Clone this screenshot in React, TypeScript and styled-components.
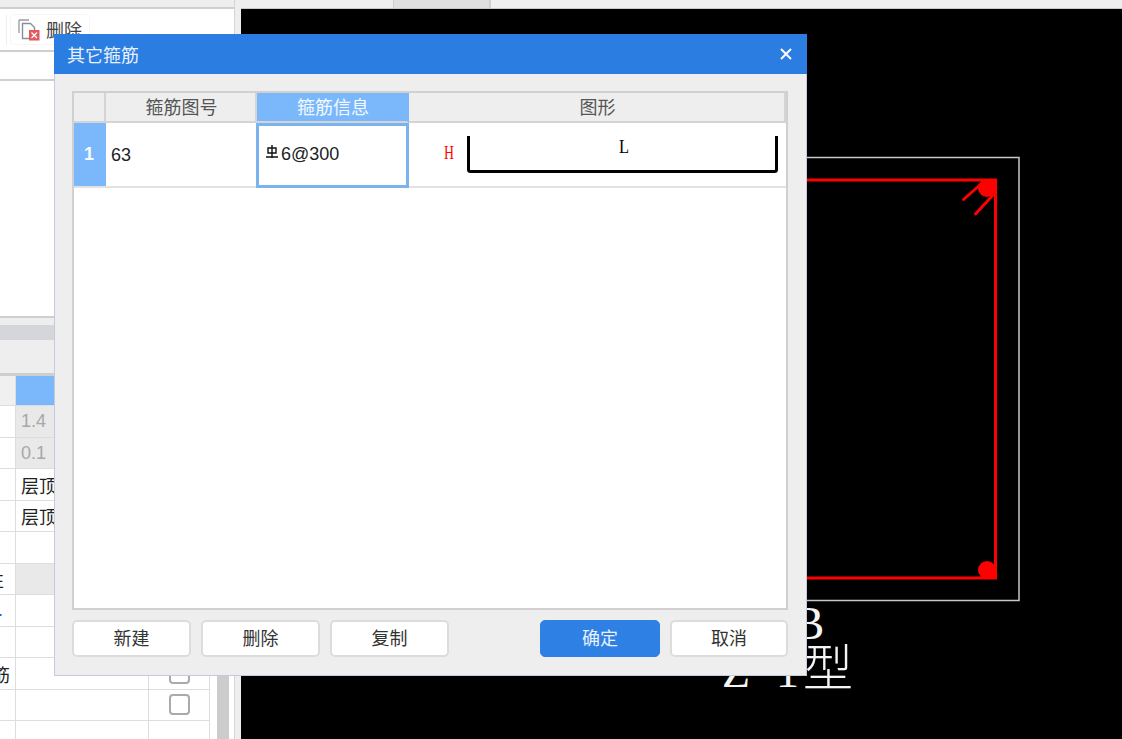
import React from "react";
import styled, { createGlobalStyle } from "styled-components";

const Global = createGlobalStyle`
  html, body { margin: 0; padding: 0; background: #000; }
  body { font-family: "Liberation Sans", "Noto Sans CJK SC", sans-serif; }
  * { box-sizing: border-box; }
`;

const Page = styled.div`
  position: relative;
  width: 1122px;
  height: 739px;
  overflow: hidden;
  display: flex;
  font-size: 18px;
  color: #222;
`;

/* left panel */
const LeftPanel = styled.aside`
  width: 241px;
  height: 100%;
  flex: none;
  display: flex;
  background: #fff;
`;
const LeftMain = styled.div`
  width: 234px;
  display: flex;
  flex-direction: column;
`;
const Gutter = styled.div`
  width: 7px;
  background: #eee;
  border-left: 1px solid #d4d4d4;
`;
const LeftStrip = styled.div`
  height: 9px;
  flex: none;
  background: #eee;
  border-bottom: 2px solid #cfcfcf;
`;
const Toolbar = styled.div`
  height: 43px;
  flex: none;
  display: flex;
  align-items: center;
  padding-left: 6px;
  gap: 3px;
  background: #fff;
  border-bottom: 2px solid #cfcfcf;
`;
const ToolSeparator = styled.span`
  width: 1px;
  height: 30px;
  background: #eee;
`;
const ToolButton = styled.div`
  width: 80px;
  height: 31px;
  display: flex;
  align-items: center;
  gap: 6px;
  padding-left: 7px;
  border: 1px solid #f6f6f6;
  border-radius: 4px;
  color: #444;
  line-height: 1;
`;
const ToolLabel = styled.span`
  padding-top: 3px;
`;
const SubBar = styled.div`
  height: 29px;
  flex: none;
  background: #fff;
  border-bottom: 2px solid #cfcfcf;
`;
const UpperArea = styled.div`
  height: 237px;
  flex: none;
  background: #fff;
  border-bottom: 2px solid #cfcfcf;
`;
const SplitGap = styled.div`
  height: 7px;
  flex: none;
  background: #eee;
`;
const GroupBar = styled.div`
  height: 15px;
  flex: none;
  background: #d5d6d9;
`;
const LowerTools = styled.div`
  height: 36px;
  flex: none;
  background: #eee;
  border-bottom: 3px solid #cfcfcf;
`;
const LowerBody = styled.div`
  flex: 1;
  min-height: 0;
  display: flex;
  overflow: hidden;
`;
const PropTable = styled.div`
  width: 210px;
  flex: none;
  display: grid;
  grid-template-columns: 16px 133px 61px;
  grid-template-rows: 30px;
  grid-auto-rows: 31.5px;
  align-content: start;
`;
const PropCell = styled.div<{ $bg?: string; $color?: string }>`
  display: flex;
  align-items: center;
  justify-content: flex-start;
  overflow: hidden;
  white-space: nowrap;
  padding: 1px 0 0 5px;
  background: ${(p) => p.$bg || "#fff"};
  color: ${(p) => p.$color || "#222"};
  border-right: 1px solid #ddd;
  border-bottom: 1px solid #ddd;
`;
const RowHead = styled(PropCell)<{ $inset?: number }>`
  justify-content: flex-end;
  padding: 1px ${(p) => p.$inset ?? 3}px 0 0;
`;
const CheckCell = styled(PropCell)`
  justify-content: center;
  padding: 0;
`;
const CheckBox = styled.span`
  width: 21px;
  height: 21px;
  border: 2px solid #aaa;
  border-radius: 4px;
  background: #fff;
`;
const ScrollTrack = styled.div`
  width: 24px;
  flex: none;
  padding: 0 5px 0 7px;
  background: #fff;
`;
const ScrollThumb = styled.div`
  height: 100%;
  background: #ccc;
`;

/* canvas */
const CanvasColumn = styled.main`
  flex: 1;
  display: flex;
  flex-direction: column;
  min-width: 0;
`;
const TabStrip = styled.div`
  height: 9px;
  flex: none;
  display: grid;
  grid-template-columns: 152px 98px 1fr;
  background: #eee;
  border-bottom: 1px solid #c8c8c8;
`;
const TabSlot = styled.div<{ $active?: boolean }>`
  background: ${(p) => (p.$active ? "#e0e0e0" : "#eee")};
  border-right: ${(p) => (p.$active ? "2px solid #cfcfcf" : "0")};
  border-left: ${(p) => (p.$active ? "1px solid #cfcfcf" : "0")};
`;
const Canvas = styled.div`
  flex: 1;
  background: #000;
`;
const Drawing = styled.svg`
  display: block;
  width: 881px;
  height: 730px;
`;
const CadText = styled.text`
  fill: #f4f4f4;
  font-family: "Liberation Serif", "Noto Sans CJK SC", serif;
  font-weight: 300;
`;

/* dialog */
const Dialog = styled.section`
  position: absolute;
  left: 54px;
  top: 34px;
  width: 753px;
  height: 642px;
  display: flex;
  flex-direction: column;
  background: #eee;
  border: 1px solid #c3cbdc;
  border-top: 0;
`;
const TitleBar = styled.header`
  height: 40px;
  flex: none;
  margin: 0 -1px;
  padding: 0 15px 0 13px;
  display: flex;
  align-items: center;
  justify-content: space-between;
  background: #2b7de1;
  color: #e8f1fc;
`;
const DialogBody = styled.div`
  flex: 1;
  min-height: 0;
  display: flex;
  flex-direction: column;
  padding: 17px 18px 18px 17px;
  gap: 10px;
`;
const Grid = styled.div`
  flex: 1;
  min-height: 0;
  display: grid;
  grid-template-columns: 32px 151px 152px 1fr;
  grid-template-rows: 30px 65px;
  align-content: start;
  background: #fff;
  border: 2px solid #d0d0d0;
`;
const HeadCell = styled.div<{ $active?: boolean }>`
  display: flex;
  align-items: center;
  justify-content: center;
  padding: 2px 0 0 2px;
  line-height: 1;
  background: ${(p) => (p.$active ? "#7ab8fb" : "#eee")};
  color: ${(p) => (p.$active ? "#f4f9ff" : "#555")};
  border-right: 2px solid ${(p) => (p.$active ? "#7ab8fb" : "#d4d4d4")};
  border-bottom: 2px solid #d4d4d4;
`;
const NumCell = styled.div`
  display: flex;
  align-items: center;
  justify-content: center;
  padding-right: 2px;
  background: #7ab8fb;
  color: #f4f9ff;
  font-weight: 700;
  border-bottom: 2px solid #e2e2e2;
`;
const DataCell = styled.div`
  display: flex;
  align-items: center;
  padding: 2px 0 0 5px;
  background: #fff;
  color: #222;
  border-bottom: 2px solid #e2e2e2;
`;
const SelectedCell = styled.div`
  display: flex;
  align-items: center;
  padding: 0 0 2px 6px;
  background: #fff;
  color: #222;
  border: 3px solid #7ab4ee;
  margin-left: -1px;
`;
const ShapeCell = styled.div`
  background: #fff;
  border-bottom: 2px solid #e2e2e2;
`;
const Shape = styled.svg`
  display: block;
  width: 377px;
  height: 63px;
`;
const ShapeLabel = styled.text<{ $red?: boolean }>`
  font-family: "Liberation Serif", serif;
  font-size: 18px;
  fill: ${(p) => (p.$red ? "#f00" : "#000")};
`;
const GradeMark = styled.svg`
  width: 14px;
  height: 16px;
  flex: none;
  margin: -5px 2px 0 0;
`;
const Footer = styled.footer`
  height: 37px;
  flex: none;
  display: flex;
  gap: 10px;
`;
const Button = styled.button<{ $primary?: boolean; $width?: number }>`
  flex: 0 0 ${(p) => p.$width ?? 119}px;
  height: 37px;
  padding: 0;
  font: inherit;
  line-height: 1;
  border-radius: 5px;
  border: ${(p) => (p.$primary ? "1px solid #2f80e4" : "2px solid #dcdcdc")};
  background: ${(p) => (p.$primary ? "#2f80e4" : "#fff")};
  color: ${(p) => (p.$primary ? "#e8f1fc" : "#333")};
`;
const FooterSpacer = styled.span`
  flex: 1;
`;

const rows: { head?: string; headColor?: string; inset?: number; value?: string; muted?: boolean; shaded?: boolean; check?: boolean }[] = [
  { value: "1.4", muted: true },
  { value: "0.1", muted: true },
  { value: "层顶" },
  { value: "层顶" },
  {},
  { head: "性", inset: 11, shaded: true },
  { head: ".", inset: 12, headColor: "#2a55ff" },
  {},
  { head: "筋", inset: 5, check: true },
  { check: true },
  {},
];

const DeleteIcon = () => (
  <svg width="22" height="22" viewBox="0 0 22 22" fill="none">
    <path d="M1 1h10M1 1v13" stroke="#9a9a9a" strokeWidth="1.3" />
    <path d="M4.5 4.5h8l4 4v11h-12z" fill="#fff" stroke="#8a8f96" strokeWidth="1.4" />
    <rect x="11" y="11" width="10.5" height="10.5" fill="#e05a5e" />
    <path d="M13.5 13.5l5.5 5.5M19 13.5l-5.5 5.5" stroke="#fff" strokeWidth="1.3" />
  </svg>
);

export default function App() {
  return (
    <Page>
      <Global />
      <LeftPanel>
        <LeftMain>
          <LeftStrip />
          <Toolbar>
            <ToolSeparator />
            <ToolButton>
              <DeleteIcon />
              <ToolLabel>删除</ToolLabel>
            </ToolButton>
          </Toolbar>
          <SubBar />
          <UpperArea />
          <SplitGap />
          <GroupBar />
          <LowerTools />
          <LowerBody>
            <PropTable>
              <RowHead $bg="#f0f0f0" />
              <PropCell $bg="#7ab8fb" />
              <PropCell $bg="#f0f0f0" />
              {rows.map((r, i) => (
                <React.Fragment key={i}>
                  <RowHead $color={r.headColor} $inset={r.inset}>{r.head}</RowHead>
                  <PropCell $bg={r.muted || r.shaded ? "#e9e9e9" : undefined} $color={r.muted ? "#a8a8a8" : undefined}>
                    {r.value}
                  </PropCell>
                  <CheckCell $bg={r.muted || r.shaded ? "#e9e9e9" : undefined}>{r.check && <CheckBox />}</CheckCell>
                </React.Fragment>
              ))}
            </PropTable>
            <ScrollTrack>
              <ScrollThumb />
            </ScrollTrack>
          </LowerBody>
        </LeftMain>
        <Gutter />
      </LeftPanel>

      <CanvasColumn>
        <TabStrip>
          <TabSlot />
          <TabSlot $active />
          <TabSlot />
        </TabStrip>
        <Canvas>
          <Drawing viewBox="241 9 881 730">
            <rect x="700" y="157.5" width="319" height="443" fill="none" stroke="#c8c8c8" strokeWidth="1.5" />
            <g stroke="#f00" strokeWidth="3" fill="none">
              <path d="M700 180H995.5V578H700" />
              <path d="M963.5 199.5L981 184M975.5 214L993 195" strokeLinecap="round" />
            </g>
            <circle cx="987" cy="188" r="9" fill="#f00" />
            <circle cx="987" cy="570" r="9" fill="#f00" />
            <path d="M987 179h10v10h-10zM987 569h10v10h-10z" fill="#f00" />
            <CadText x="793" y="639" fontSize="47">B</CadText>
            <CadText x="722" y="687" fontSize="46">Z</CadText>
            <CadText x="776" y="687" fontSize="46">1</CadText>
            <CadText x="803" y="686" fontSize="50">型</CadText>
          </Drawing>
        </Canvas>
      </CanvasColumn>

      <Dialog>
        <TitleBar>
          <span>其它箍筋</span>
          <svg width="12" height="12" viewBox="0 0 12 12">
            <path d="M1 1l10 10M11 1L1 11" stroke="#fff" strokeWidth="2" />
          </svg>
        </TitleBar>
        <DialogBody>
          <Grid>
            <HeadCell />
            <HeadCell>箍筋图号</HeadCell>
            <HeadCell $active>箍筋信息</HeadCell>
            <HeadCell>图形</HeadCell>
            <NumCell>1</NumCell>
            <DataCell>63</DataCell>
            <SelectedCell>
              <GradeMark viewBox="0 0 14 16" role="img" aria-label="钢筋等级符号">
                <path d="M7 1v13M3 4h8v5H3zM1 13h12" fill="none" stroke="#111" strokeWidth="1.4" />
              </GradeMark>
              6@300
            </SelectedCell>
            <ShapeCell>
              <Shape viewBox="0 0 377 63">
                <ShapeLabel $red x="35" y="36" textLength={10} lengthAdjust="spacingAndGlyphs">H</ShapeLabel>
                <ShapeLabel x="210" y="30" textLength={10} lengthAdjust="spacingAndGlyphs">L</ShapeLabel>
                <path d="M59.5 13V46.5a2 2 0 0 0 2 2H365.5a2 2 0 0 0 2-2V13" fill="none" stroke="#000" strokeWidth="3" />
              </Shape>
            </ShapeCell>
          </Grid>
          <Footer>
            <Button>新建</Button>
            <Button>删除</Button>
            <Button>复制</Button>
            <FooterSpacer />
            <Button $primary $width={120}>确定</Button>
            <Button $width={118}>取消</Button>
          </Footer>
        </DialogBody>
      </Dialog>
    </Page>
  );
}
